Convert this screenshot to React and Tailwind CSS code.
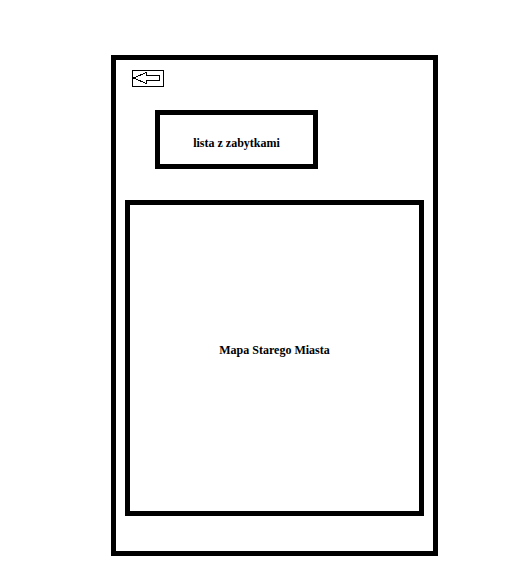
function BackButton() {
  return (
    <button type="button" aria-label="Wstecz" className="block h-[17px] w-8 border border-black bg-white">
      <svg
        width="30"
        height="15"
        viewBox="0 0 30 15"
        fill="none"
        stroke="black"
        shapeRendering="crispEdges"
        className="block"
        aria-hidden="true"
      >
        <path d="M0.5 7 L13.5 1.5 V4.5 H26.5 V9.5 H13.5 V12.5 Z" />
      </svg>
    </button>
  );
}

export default function App() {
  return (
    <div className="flex min-h-screen justify-center bg-white pt-[55px] pb-7 pl-7 font-['Liberation_Serif',serif] text-xs leading-4 font-bold text-black">
      <main className="flex w-full max-w-[327px] flex-col self-start border-5 border-black px-[9px] pt-2.5 pb-[35px]">
        <header className="pl-[7px]">
          <BackButton />
        </header>
        <section className="mt-[23px] ml-[30px] w-full max-w-[163px] border-5 border-black pt-5 pb-[13px] text-center">
          <h2>lista z zabytkami</h2>
        </section>
        <section className="mt-[31px] flex h-[316px] items-center justify-center border-5 border-black pb-4 text-center">
          <h2>Mapa Starego Miasta</h2>
        </section>
      </main>
    </div>
  );
}
